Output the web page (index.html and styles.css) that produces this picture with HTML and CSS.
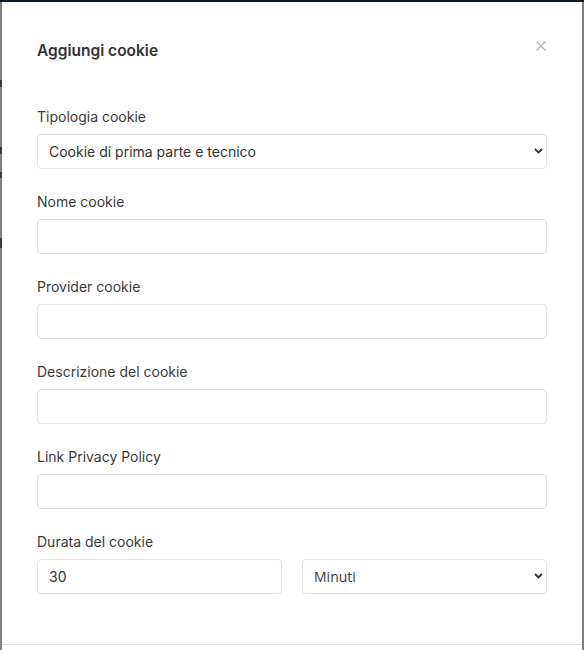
FILE: index.html
```html
<!DOCTYPE html>
<html lang="it">
<head>
<meta charset="utf-8">
<title>Aggiungi cookie</title>
<link rel="stylesheet" href="styles.css">
</head>
<body>
<div class="backdrop">
  <div class="page-strip">
    <span class="frag f1"></span>
    <span class="frag f2"></span>
    <span class="frag f3"></span>
    <span class="frag f4"></span>
  </div>
  <div class="modal">
    <div class="modal-header">
      <h2 class="modal-title">Aggiungi cookie</h2>
      <button class="close" type="button" aria-label="Chiudi">
        <svg width="10" height="10" viewBox="0 0 10 10"><path d="M0.5 0.5 L9.5 9.5 M9.5 0.5 L0.5 9.5" stroke="#b5b5b5" stroke-width="1.3" fill="none"/></svg>
      </button>
    </div>
    <div class="modal-body">
      <div class="group">
        <label class="label">Tipologia cookie</label>
        <div class="select-wrap">
          <select class="control select">
            <option>Cookie di prima parte e tecnico</option>
          </select>
          <svg class="chev" width="9" height="6" viewBox="0 0 9 6"><path d="M1 1 L4.5 4.5 L8 1" stroke="#333" stroke-width="1.8" fill="none"/></svg>
        </div>
      </div>
      <div class="group">
        <label class="label">Nome cookie</label>
        <input class="control" type="text">
      </div>
      <div class="group">
        <label class="label">Provider cookie</label>
        <input class="control" type="text">
      </div>
      <div class="group">
        <label class="label">Descrizione del cookie</label>
        <input class="control" type="text">
      </div>
      <div class="group">
        <label class="label">Link Privacy Policy</label>
        <input class="control" type="text">
      </div>
      <div class="group">
        <label class="label">Durata del cookie</label>
        <div class="row">
          <input class="control" type="text" value="30">
          <div class="select-wrap">
            <select class="control select alt">
              <option>Minuti</option>
            </select>
            <svg class="chev" width="9" height="6" viewBox="0 0 9 6"><path d="M1 1 L4.5 4.5 L8 1" stroke="#333" stroke-width="1.8" fill="none"/></svg>
          </div>
        </div>
      </div>
    </div>
    <div class="modal-footer"></div>
  </div>
  <div class="right-strip"></div>
</div>
</body>
</html>
```

FILE: styles.css
```css
* { box-sizing: border-box; }
html, body { margin: 0; padding: 0; }
body {
  background: #7f7f7f;
  font-family: Inter, "Liberation Sans", sans-serif;
  overflow: hidden;
  height: 650px;
}
.backdrop {
  border-top: 2px solid #0c1a28;
  display: flex;
  height: 650px;
}
.page-strip {
  width: 2px;
  flex: none;
  display: flex;
  flex-direction: column;
  background: #808080;
}
.frag { display: block; width: 2px; height: 7px; background: #3a3a3a; }
.f1 { margin-top: 78px; }
.f2 { margin-top: 60px; }
.f3 { margin-top: 18px; height: 6px; }
.f4 { margin-top: 60px; height: 10px; }
.modal {
  width: 580px;
  flex: none;
  background: #fff;
  height: 648px;
  overflow: hidden;
}
.right-strip {
  width: 2px;
  flex: none;
  margin-top: 18px;
  background: #7f7f7f;
}
.modal-header {
  display: flex;
  justify-content: space-between;
  padding: 37px 36px 0 35px;
}
.modal-title {
  margin: 0;
  font-size: 15.5px;
  line-height: 24px;
  font-weight: 600;
  color: #333;
}
.close {
  border: 0;
  background: transparent;
  padding: 0;
  margin-top: 2px;
  width: 10px;
  height: 10px;
  display: flex;
}
.modal-body {
  padding: 44px 35px 27px 35px;
}
.group {
  display: flex;
  flex-direction: column;
  margin-bottom: 23px;
}
.label {
  font-size: 14px;
  line-height: 20px;
  color: #3a3a3a;
  margin-bottom: 7px;
}
.control {
  width: 100%;
  height: 35px;
  border: 1px solid #dde1e5;
  border-radius: 4px;
  background: #fff;
  padding: 0 11px;
  font-family: Inter, "Liberation Sans", sans-serif;
  font-size: 14px;
  color: #333;
  outline: none;
}
.select-wrap {
  position: relative;
  width: 100%;
}
.select {
  appearance: none;
  -webkit-appearance: none;
}
.select.alt {
  font-family: "Open Sans", "Liberation Sans", sans-serif;
  color: #3a3a3a;
}
.chev {
  position: absolute;
  right: 4px;
  top: 14px;
  pointer-events: none;
}
.row {
  display: grid;
  grid-template-columns: 1fr 1fr;
  gap: 20px;
}
.modal-footer {
  border-top: 1px solid #dee2e6;
  height: 60px;
}
```
